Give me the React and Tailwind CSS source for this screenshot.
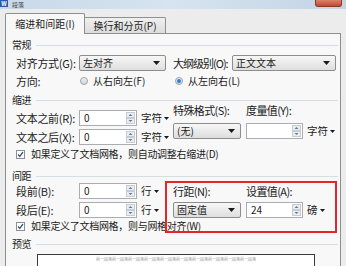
import React from 'react';

const font = { fontFamily: '"Noto Sans CJK SC", "Noto Sans", sans-serif' };

function Arrow() {
  return (
    <svg width="7" height="4" viewBox="0 0 7 4" className="shrink-0">
      <path d="M0 0h7L3.5 4z" fill="#1a1a1a" />
    </svg>
  );
}

function Select({ w, children }) {
  return (
    <div className={`${w} h-[16px] flex items-center justify-between pl-[3px] pr-[5px] rounded-[2px] border border-[#8d8d8d] bg-gradient-to-b from-[#f7f7f7] to-[#dedede] text-[10px] leading-none whitespace-nowrap`}>
      <span>{children}</span>
      <Arrow />
    </div>
  );
}

function Spin({ w, value }) {
  return (
    <div className={`${w} h-[16px] flex items-center justify-between pl-[4px] pr-[1px] border border-[#abadb3] bg-white text-[10px] leading-none`}>
      <span>{value}</span>
      <svg width="9" height="12" viewBox="0 0 9 12" className="shrink-0">
        <rect x="0.5" y="0.5" width="8" height="5" fill="#e9eef3" stroke="#c5ccd4" />
        <rect x="0.5" y="6.5" width="8" height="5" fill="#e9eef3" stroke="#c5ccd4" />
        <path d="M2.5 4h4L4.5 2z" fill="#6d7784" />
        <path d="M2.5 8h4L4.5 10z" fill="#6d7784" />
      </svg>
    </div>
  );
}

function Unit({ children }) {
  return (
    <span className="flex items-center gap-[2px] text-[10.5px] leading-none">
      {children}
      <svg width="5" height="3" viewBox="0 0 5 3"><path d="M0 0h5L2.5 3z" fill="#1a1a1a" /></svg>
    </span>
  );
}

function Heading({ children, className }) {
  return (
    <div className={`flex items-center h-[12px] text-[10px] leading-none tracking-[-0.6px] ${className}`}>
      <span>{children}</span>
      <div className="flex-1 ml-[5px] mr-[2px] h-px bg-[#d6dde3]" />
    </div>
  );
}

function Radio({ checked, children }) {
  return (
    <span className="flex items-center gap-[5px] text-[10px] leading-none whitespace-nowrap">
      <span className="w-[8px] h-[8px] rounded-full border border-[#9aa3ad] bg-gradient-to-b from-[#f2f2f2] to-[#d6d6d6] flex items-center justify-center">
        {checked && <span className="w-[4px] h-[4px] rounded-full bg-[#2f7fd6]" />}
      </span>
      {children}
    </span>
  );
}

function Check({ children, className }) {
  return (
    <div className={`flex items-center gap-[6px] pl-[4px] h-[14px] text-[10px] leading-none tracking-[-0.3px] whitespace-nowrap ${className}`}>
      <span className="w-[9px] h-[9px] border border-[#8f8f8f] bg-white flex items-center justify-center">
        <svg width="7" height="7" viewBox="0 0 7 7"><path d="M1 3.5l1.8 2L6 1" stroke="#3a5a8c" strokeWidth="1.3" fill="none" /></svg>
      </span>
      <span>{children}</span>
    </div>
  );
}

const lbl = 'text-[11px] leading-none whitespace-nowrap tracking-[-0.3px]';

export default function App() {
  return (
    <div className="relative w-[346px] h-[266px] overflow-hidden bg-[#ececec] text-[#1a1a1a]" style={font}>
      {/* title bar */}
      <div className="h-[9px] flex items-center bg-gradient-to-r from-[#c9d9ea] via-[#d7e3ef] to-[#c4d4e6]">
        <div className="self-start w-[8px] h-[7px] bg-[#2b5ca8] text-white text-[6px] leading-[7px] text-center font-bold">W</div>
        <span className="ml-[4px] text-[6px] leading-[8px] text-[#444]">段落</span>
        <div className="self-start ml-auto mr-[4px] w-[27px] h-[7px] rounded-b-[3px] bg-gradient-to-b from-[#d9826b] to-[#c2482e] border border-[#8c3a28] border-t-0" />
      </div>

      {/* tabs */}
      <div className="flex items-end h-[24px] pl-[5px] pt-[3px]">
        <div className="w-[80px] h-[21px] flex items-center justify-center bg-[#f8f8f8] border border-b-0 border-[#8e8f8f] rounded-t-[2px] text-[10px] leading-none relative top-px z-10">
          缩进和间距(I)
        </div>
        <div className="w-[81px] h-[16px] flex items-center justify-center bg-gradient-to-b from-[#f0f0f0] to-[#dcdcdc] border border-b-0 border-l-0 border-[#8e8f8f] rounded-tr-[2px] text-[10px] leading-none">
          换行和分页(P)
        </div>
      </div>

      {/* panel */}
      <div className="ml-[5px] w-[336px] h-[240px] border border-[#8e8f8f] bg-[#f8f8f8] pl-[6px] pt-[5px]">
        <Heading>常规</Heading>
        <div className="mt-[4px] pl-[4px] flex items-center h-[16px]">
          <span className={`w-[63px] ${lbl}`}>对齐方式(G):</span>
          <Select w="w-[87px]">左对齐</Select>
          <span className={`ml-[7px] w-[59px] ${lbl} tracking-[-1px]`}>大纲级别(O):</span>
          <Select w="w-[104px]">正文文本</Select>
        </div>
        <div className="mt-[2px] pl-[4px] flex items-center h-[16px]">
          <span className={`w-[64px] ${lbl}`}>方向:</span>
          <div className="w-[95px]"><Radio>从右向左(F)</Radio></div>
          <Radio checked>从左向右(L)</Radio>
        </div>

        <Heading className="mt-[5px]">缩进</Heading>
        <div className="mt-[2px] pl-[4px] flex">
          <div className="w-[157px] pt-[2px] flex flex-col gap-[3px]">
            <div className="flex items-center h-[16px]">
              <span className={`w-[63px] ${lbl}`}>文本之前(R):</span>
              <Spin w="w-[58px]" value="0" />
              <span className="ml-[4px]"><Unit>字符</Unit></span>
            </div>
            <div className="flex items-center h-[16px]">
              <span className={`w-[63px] ${lbl}`}>文本之后(X):</span>
              <Spin w="w-[58px]" value="0" />
              <span className="ml-[4px]"><Unit>字符</Unit></span>
            </div>
          </div>
          <div className="-mt-[5px] flex flex-col">
            <div className={`flex h-[14px] items-center ${lbl} tracking-[-0.6px]`}>
              <span className="w-[73px]">特殊格式(S):</span>
              <span>度量值(Y):</span>
            </div>
            <div className="mt-[6px] flex items-center">
              <Select w="w-[68px]">(无)</Select>
              <span className="ml-[5px]"><Spin w="w-[57px]" value="" /></span>
              <span className="ml-[4px]"><Unit>字符</Unit></span>
            </div>
          </div>
        </div>
        <Check className="mt-[2px]">如果定义了文档网格，则自动调整右缩进(D)</Check>

        <Heading className="mt-[9px]">间距</Heading>
        <div className="mt-[1px] pl-[4px] flex">
          <div className="w-[157px] flex flex-col gap-[3px]">
            <div className="flex items-center h-[16px]">
              <span className={`w-[63px] ${lbl}`}>段前(B):</span>
              <Spin w="w-[58px]" value="0" />
              <span className="ml-[4px]"><Unit>行</Unit></span>
            </div>
            <div className="flex items-center h-[16px]">
              <span className={`w-[63px] ${lbl}`}>段后(E):</span>
              <Spin w="w-[58px]" value="0" />
              <span className="ml-[4px]"><Unit>行</Unit></span>
            </div>
          </div>
          <div className="flex flex-col">
            <div className={`flex h-[16px] items-center ${lbl} tracking-[-0.6px]`}>
              <span className="w-[73px]">行距(N):</span>
              <span>设置值(A):</span>
            </div>
            <div className="mt-[3px] flex items-center">
              <Select w="w-[68px]">固定值</Select>
              <span className="ml-[5px]"><Spin w="w-[57px]" value="24" /></span>
              <span className="ml-[4px]"><Unit>磅</Unit></span>
            </div>
          </div>
        </div>
        <Check className="mt-[1px]">如果定义了文档网格，则与网格对齐(W)</Check>

        <Heading className="mt-[5px]">预览</Heading>
        <div className="mt-[4px] ml-[25px] w-[278px] h-[20px] border border-[#3a3a3a] bg-white pt-[2px] text-center">
          <div className="text-[4px] leading-[5px] text-[#9a9a9a]">前一段落前一段落前一段落前一段落前一段落前一段落前一段落前一段落前一段落前一段落</div>
        </div>
      </div>

      {/* red annotation box */}
      <div className="absolute left-[165px] top-[181px] w-[172px] h-[52px] border-2 border-[#e5252a]" />
    </div>
  );
}
